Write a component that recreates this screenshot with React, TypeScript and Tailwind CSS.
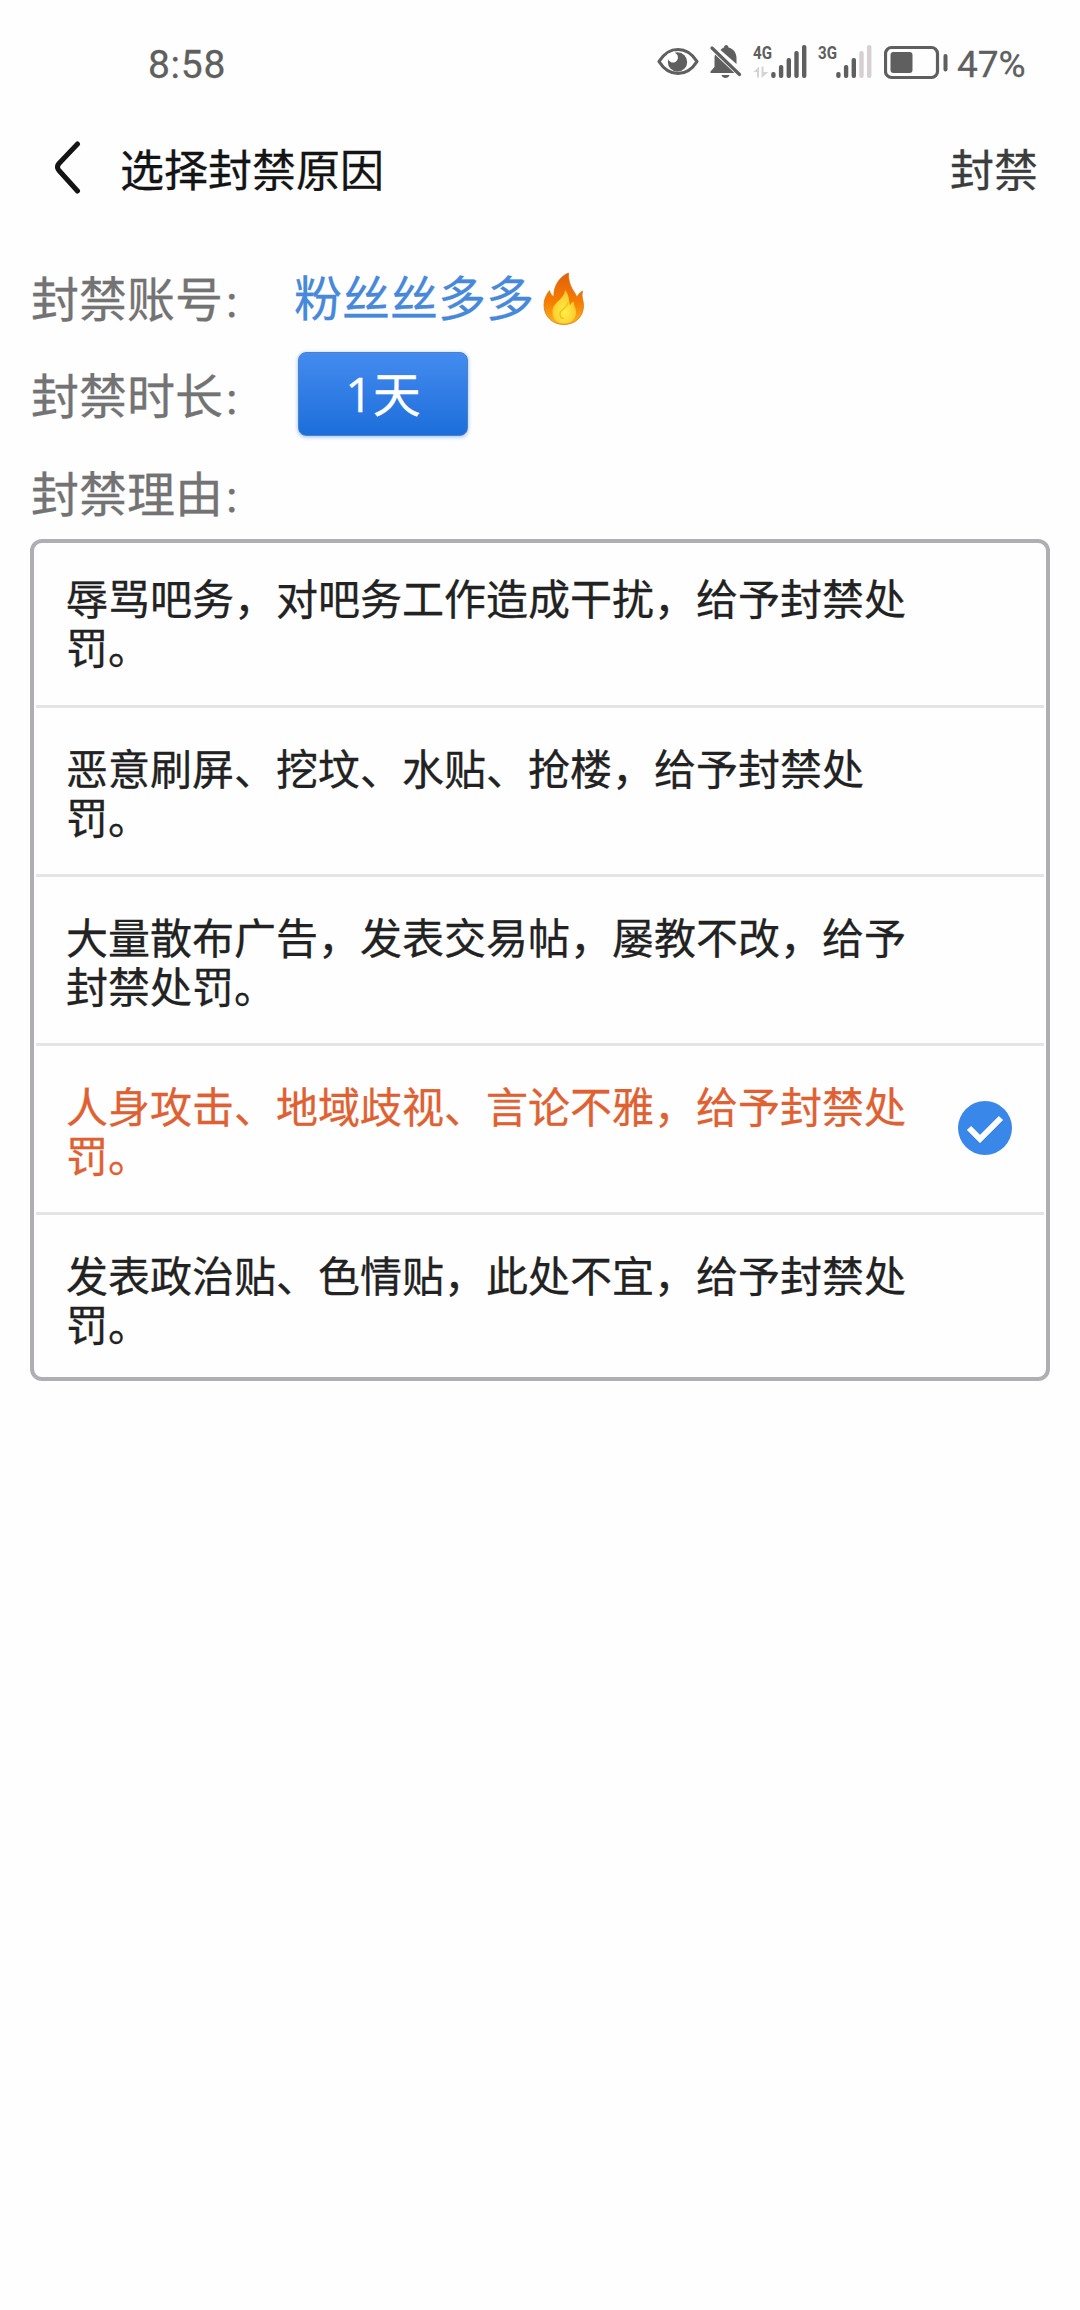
import React, { useState } from 'react';

interface SignalProps {
  label: string;
  active: number;
  showTraffic?: boolean;
}

const REASONS = [
  '辱骂吧务，对吧务工作造成干扰，给予封禁处罚。',
  '恶意刷屏、挖坟、水贴、抢楼，给予封禁处罚。',
  '大量散布广告，发表交易帖，屡教不改，给予封禁处罚。',
  '人身攻击、地域歧视、言论不雅，给予封禁处罚。',
  '发表政治贴、色情贴，此处不宜，给予封禁处罚。',
];

const BAR_HEIGHTS = [6, 13, 20, 27, 33];

const Signal: React.FC<SignalProps> = ({ label, active, showTraffic }) => (
  <svg viewBox="0 -8 58 44" className="w-[58px] h-11 -mt-2 -mr-1 shrink-0">
    <text x="0" y="15" fontSize="19" fontWeight="700" textLength="19" lengthAdjust="spacingAndGlyphs" fill="#5f5f5f">
      {label}
    </text>
    {showTraffic && (
      <path d="M0.5 28l5.5-5.5v11H4V28zM8.5 22.5h2V28h5l-7 6z" fill="#d6d3d5" />
    )}
    {BAR_HEIGHTS.map((h, i) => (
      <rect key={h} x={18.2 + i * 7.7} y={34 - h} width="4.4" height={h} rx="2" fill={i < active ? '#5f5f5f' : '#d6d0d3'} />
    ))}
  </svg>
);

const StatusBar: React.FC = () => (
  <div className="h-[122px] pl-[148px] pt-[44px] flex items-start text-[#5f5f5f] font-['Roboto',sans-serif]">
    <span className="w-[509px] mt-px text-[39px] leading-10 tracking-[0.7px]">8:58</span>
    <div className="flex items-start h-9">
      <svg viewBox="0 0 42 36" className="w-[42px] h-9 mr-[11px]">
        <path d="M2 17.5C7 9.5 13.5 5.5 21 5.5S35 9.5 40 17.5C35 25.5 28.5 29.5 21 29.5S7 25.5 2 17.5Z" fill="none" stroke="#5f5f5f" strokeWidth="3.2" strokeLinejoin="round" />
        <circle cx="20.5" cy="18" r="9.7" fill="#5f5f5f" />
        <path d="M11 14.5A5 5 0 1 0 18 9L17.5 7L10.5 10Z" fill="#fff" />
      </svg>
      <svg viewBox="0 0 32 36" className="w-8 h-9 mr-[11px]">
        <path d="M10.5 6C12 4.2 13.2 3.7 14 3.5C14 0 18.5 0 18.5 3.5C23.5 4.8 26.5 9 26.5 14V20Z" fill="#5f5f5f" />
        <path d="M5 10.5L24.5 29H0.5V27.5L4.5 23V13Z" fill="#5f5f5f" />
        <path d="M2 4L29.5 30.5" stroke="#5f5f5f" strokeWidth="3.2" strokeLinecap="round" />
        <path d="M11.5 31h8c-1 4-7 4-8 0Z" fill="#5f5f5f" />
      </svg>
      <Signal label="4G" active={5} showTraffic />
      <div className="w-[11px]" />
      <Signal label="3G" active={3} />
      <svg viewBox="0 0 64 36" className="w-16 h-9 ml-3">
        <rect x="1.5" y="3.5" width="52" height="30" rx="6" fill="none" stroke="#5f5f5f" strokeWidth="3.2" />
        <rect x="6.5" y="8" width="22" height="21" rx="3" fill="#5f5f5f" />
        <rect x="59.5" y="10" width="4" height="17.5" rx="2" fill="#5f5f5f" />
      </svg>
      <span className="ml-[9px] mt-px text-[37px] leading-10">47%</span>
    </div>
  </div>
);

const FireIcon: React.FC = () => (
  <svg viewBox="0 0 42 54" className="w-[42px] h-[54px] ml-[9px] mt-0.5">
    <defs>
      <linearGradient id="outer" x1="0" y1="0" x2="0" y2="1">
        <stop offset="0" stopColor="#e0600f" />
        <stop offset="0.55" stopColor="#f57c00" />
        <stop offset="1" stopColor="#fbb520" />
      </linearGradient>
      <radialGradient id="inner" cx="0.5" cy="0.65" r="0.6">
        <stop offset="0" stopColor="#fff04a" />
        <stop offset="1" stopColor="#fcc427" />
      </radialGradient>
    </defs>
    <path
      d="M25.5 1C23 1.5 10 9 11 25C8.5 23.5 7 21 6.5 18.5C3 23 1 27.5 1 33C1 44.5 9.5 52.5 21 52.5S40.5 44.5 40.5 33.5C40.5 28 38 25.5 39.5 19C37 20.5 35 22.5 34 25.5C32.5 20 25 15 25.5 1Z"
      fill="url(#outer)"
      stroke="#d9780f"
      strokeWidth="0.8"
    />
    <path
      d="M22 18C22 27 9.5 30 9.5 40C9.5 47 14 51.5 21 51.5S33 47 33 40.5C33 36 31 34.5 30.5 29.5C28.5 30.5 27.5 32 27 34C26 29 26 22 22 18Z"
      fill="url(#inner)"
    />
    <path d="M25 30C25 36 17 37 17 42C17 45 19 46.5 21 46.5" fill="none" stroke="#f3c21c" strokeWidth="1.5" />
  </svg>
);

const CheckIcon: React.FC = () => (
  <svg viewBox="0 0 54 54" className="w-[54px] h-[54px] mb-px shrink-0">
    <circle cx="27" cy="27" r="27" fill="#3a87ea" />
    <path d="M11 28L22 39L43 18" fill="none" stroke="#2d6cc4" strokeOpacity="0.5" strokeWidth="6" />
    <path d="M11 27L22 38L43 17" fill="none" stroke="#fff" strokeWidth="6" />
  </svg>
);

const Label: React.FC<{ text: string }> = ({ text }) => (
  <span className="w-[263px] pb-1">
    {text}
    <span className="text-[35px] leading-none">：</span>
  </span>
);

// The list frame takes up part of the first and the last row
const rowClass = (i: number) => {
  if (i === 0) return 'h-[165px] pb-1.5 border-b-[3px]';
  if (i === REASONS.length - 1) return 'h-[162px] pt-[3px]';
  return 'h-[169px] pb-px border-b-[3px]';
};

const App: React.FC = () => {
  const [selected, setSelected] = useState(3);

  return (
    <div
      className="w-[1080px] h-[2310px] bg-[#fefefe] overflow-hidden font-['Noto_Sans_CJK_SC',sans-serif] [-webkit-text-stroke:0.3px]"
      lang="zh-CN"
    >
      <StatusBar />

      {/* Title bar */}
      <header className="h-24 pl-[55px] pr-[42px] flex items-center">
        <svg viewBox="0 0 26 54" className="w-[26px] h-[54px] mr-[39px] -mt-1">
          <path d="M22.5 3L4 22.5Q1 26 4 29.5L22.5 50" fill="none" stroke="#141414" strokeWidth="5" strokeLinecap="round" />
        </svg>
        <h1 className="flex-1 pb-[5px] text-[44px] leading-[48px] text-[#141414]">选择封禁原因</h1>
        <button type="button" className="pb-[5px] text-[44px] leading-[48px] text-[#3c3c3c] cursor-pointer">封禁</button>
      </header>

      {/* Account and duration */}
      <section className="pl-[31px] pt-[31px] text-[48px] leading-[60px] text-[#737373]">
        <div className="h-[97px] flex items-center">
          <Label text="封禁账号" />
          <span className="pb-[5px] text-[#4688d9]">粉丝丝多多</span>
          <FireIcon />
        </div>
        <div className="h-[97px] flex items-center">
          <Label text="封禁时长" />
          <button
            type="button"
            className="w-[170px] h-[84px] ml-1 mb-px rounded-lg border border-[#4a80cc] bg-linear-to-b from-[#438bef] to-[#1b6edb] shadow-[0_1px_4px_#93bdf5] text-white font-['Open_Sans','Noto_Sans_CJK_SC',sans-serif] cursor-pointer"
          >
            1天
          </button>
        </div>
        <div className="h-[98px] pt-px flex items-center">
          <Label text="封禁理由" />
        </div>
      </section>

      {/* Reasons */}
      <ul className="w-[1020px] h-[842px] ml-[30px] -mt-[2px] px-0.5 border-4 border-[#afafb3] rounded-[12px] flex flex-col text-[42px] leading-[49px]">
        {REASONS.map((reason, i) => (
          <li
            key={reason}
            onClick={() => setSelected(i)}
            className={`pl-[30px] pr-8 flex items-center justify-between cursor-pointer border-[#e4e4e6] ${rowClass(i)} ${
              i === selected ? 'text-[#df6132]' : 'text-[#222222]'
            }`}
          >
            <p className="w-[860px]">{reason}</p>
            {i === selected && <CheckIcon />}
          </li>
        ))}
      </ul>
    </div>
  );
};

export default App;
